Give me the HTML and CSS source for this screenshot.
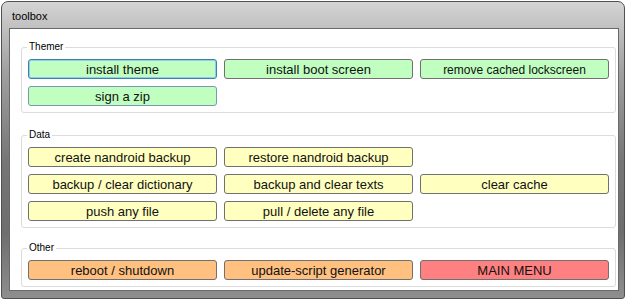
FILE: index.html
```html
<!DOCTYPE html>
<html lang="en">
<head>
	<meta charset="UTF-8">
	<title>toolbox</title>
	<link rel="stylesheet" href="styles.css">
</head>
<body>
	<div class="window">
		<div class="titlebar">toolbox</div>
		<div class="client">
			<!-- Themer -->
			<div class="group group-themer">
				<span class="group-label">Themer</span>
				<div class="buttons">
					<button class="btn green focused">install theme</button>
					<button class="btn green">install boot screen</button>
					<button class="btn green small">remove cached lockscreen</button>
					<button class="btn green hovered">sign a zip</button>
				</div>
			</div>
			<!-- Data -->
			<div class="group group-data">
				<span class="group-label">Data</span>
				<div class="buttons">
					<button class="btn yellow">create nandroid backup</button>
					<button class="btn yellow">restore nandroid backup</button>
					<span class="empty"></span>
					<button class="btn yellow">backup / clear dictionary</button>
					<button class="btn yellow">backup and clear texts</button>
					<button class="btn yellow">clear cache</button>
					<button class="btn yellow">push any file</button>
					<button class="btn yellow">pull / delete any file</button>
				</div>
			</div>
			<!-- Other -->
			<div class="group group-other">
				<span class="group-label">Other</span>
				<div class="buttons">
					<button class="btn orange">reboot / shutdown</button>
					<button class="btn orange">update-script generator</button>
					<button class="btn red">MAIN MENU</button>
				</div>
			</div>
		</div>
	</div>
</body>
</html>
```

FILE: styles.css
```css
body{margin:0;background:#fff;font-family:"Liberation Sans",Arial,sans-serif;}

.window{box-sizing:border-box;width:624px;height:298px;margin:1px 0 0 1px;padding:0 6px 8px 8px;border:1px solid #505050;border-radius:7px 7px 3px 3px;background:linear-gradient(to bottom,#d4d4d4 0,#c0c0c0 26px,#a0a0a0 70px,#767676 160px,#6e6e6e 230px,#8e8e8e 100%);display:flex;flex-direction:column;}
.titlebar{height:27px;line-height:28px;padding-left:2px;font-size:11px;color:#000;flex:none;}

.client{flex:1;background:#fff;box-shadow:0 0 0 1px #6a6a6a;padding:18px 2px 0 11px;display:flex;flex-direction:column;}

.group{position:relative;border:1px solid #dcdcdc;border-radius:3px;padding:11px 6px 6px 6px;}
.group-data{margin-top:22px;}
.group-other{margin-top:20px;}
.group-label{position:absolute;left:5px;top:-7px;padding:0 2px;background:#fff;font-size:10px;line-height:12px;color:#000;}

.buttons{display:grid;grid-template-columns:189px 189px 189px;grid-auto-rows:20px;column-gap:7px;row-gap:7px;}

.btn{box-sizing:border-box;height:20px;margin:0;padding:1px 0 0;border:1px solid #707070;border-radius:3px;font-family:"Liberation Sans",Arial,sans-serif;font-size:13px;color:#111;text-align:center;}
.btn.small{font-size:12px;}
.btn.green{background:#c0ffc0;}
.btn.yellow{background:#ffffc0;}
.btn.orange{background:#ffc080;}
.btn.red{background:#ff8080;}
.btn.focused{border-color:#3c7fb1;box-shadow:inset 0 0 0 1px #8fcdf0;}
.btn.hovered{border-color:#7899b2;}
```
